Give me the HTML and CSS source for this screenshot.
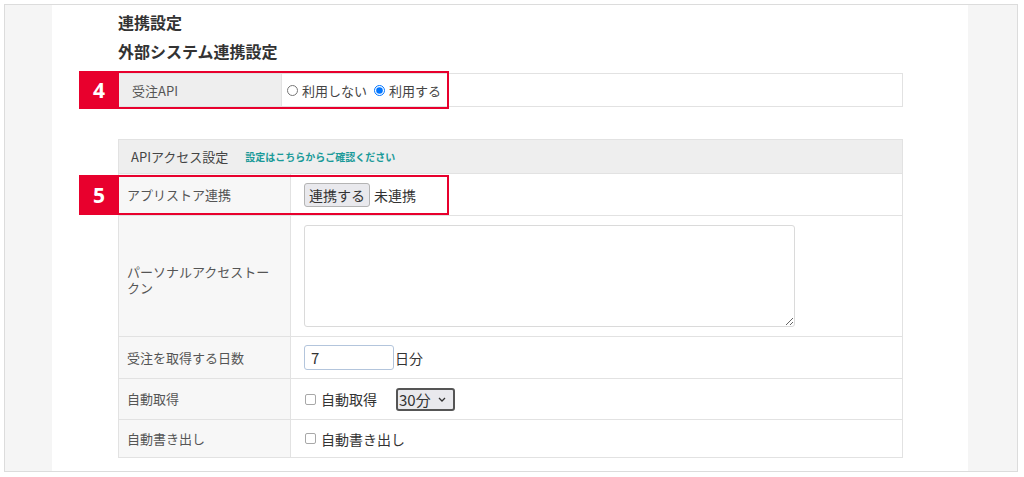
FILE: index.html
```html
<!DOCTYPE html>
<html lang="ja">
<head>
<meta charset="utf-8">
<title>連携設定</title>
<link rel="stylesheet" href="styles.css">
</head>
<body>
<div class="frame">
  <div class="side"></div>
  <main class="content">
    <h1 class="h1">連携設定</h1>
    <h2 class="h2">外部システム連携設定</h2>

    <div class="tbl tbl1">
      <div class="row1">
        <div class="lab1">受注API</div>
        <div class="val1">
          <label class="opt"><input type="radio" name="api"> 利用しない</label>
          <label class="opt"><input type="radio" name="api" checked> 利用する</label>
        </div>
      </div>
      <div class="anno anno4"><span class="badge">4</span></div>
    </div>

    <div class="tbl tbl2">
      <div class="head">APIアクセス設定<span class="link">設定はこちらからご確認ください</span></div>
      <div class="row r1">
        <div class="lab">アプリストア連携</div>
        <div class="val"><button class="btn" type="button">連携する</button><span class="status">未連携</span></div>
      </div>
      <div class="row r2">
        <div class="lab lab-wrap">パーソナルアクセストークン</div>
        <div class="val"><textarea class="ta"></textarea></div>
      </div>
      <div class="row r3">
        <div class="lab">受注を取得する日数</div>
        <div class="val"><input class="num" type="text" value="7"><span class="unit">日分</span></div>
      </div>
      <div class="row r4">
        <div class="lab">自動取得</div>
        <div class="val"><label class="chk"><input type="checkbox"> 自動取得</label><span class="selwrap"><select class="sel"><option>30分</option></select><svg class="chev" width="8" height="5" viewBox="0 0 8 5"><path d="M1 1 L4 4 L7 1" fill="none" stroke="#333" stroke-width="1.3"/></svg></span></div>
      </div>
      <div class="row r5">
        <div class="lab">自動書き出し</div>
        <div class="val"><label class="chk"><input type="checkbox"> 自動書き出し</label></div>
      </div>
      <div class="anno anno5"><span class="badge">5</span></div>
    </div>
  </main>
  <div class="side"></div>
</div>
</body>
</html>
```
FILE: styles.css
```css
* { box-sizing: border-box; }
html, body { margin: 0; padding: 0; background: #fff; }
body {
  font-family: "Noto Sans CJK JP", "Noto Sans", sans-serif;
  color: #333;
}
.frame {
  margin: 4px 0 0 4px;
  width: 1014px;
  height: 468px;
  border: 1px solid #dcdcdc;
  display: grid;
  grid-template-columns: 47px 916px 1fr;
  overflow: hidden;
}
.side { background: #f5f5f5; }
.content {
  background: #fff;
  padding: 8px 0 0 66px;
}
.h1, .h2 {
  margin: 0;
  font-size: 16px;
  line-height: 18px;
  font-weight: 700;
  color: #333;
}
.h2 { margin-top: 11px; }

.tbl {
  position: relative;
  width: 785px;
  border: 1px solid #e2e2e2;
}
.tbl1 { margin-top: 13px; }
.row1 {
  display: grid;
  grid-template-columns: 163px 1fr;
  height: 32px;
}
.lab1 {
  background: #eeeeee;
  border-right: 1px solid #e2e2e2;
  font-size: 13px;
  color: #555;
  padding-left: 13px;
  display: flex;
  align-items: center;
}
.val1 {
  display: flex;
  align-items: center;
  padding-left: 4px;
  font-size: 13px;
  color: #444;
}
.opt { display: inline-flex; align-items: center; margin-right: 6px; }
.opt input {
  width: 11px; height: 11px;
  margin: 0 4px 0 1px;
}

.tbl2 { margin-top: 32px; }
.head {
  height: 33px;
  background: #eeeeee;
  display: flex;
  align-items: center;
  padding-left: 12px;
  font-size: 13px;
  color: #444;
}
.link {
  margin-left: 17px;
  font-size: 10px;
  font-weight: 700;
  color: #1a9a99;
}
.row {
  display: grid;
  grid-template-columns: 172px 1fr;
  border-top: 1px solid #e2e2e2;
}
.r1 { height: 42px; }
.r2 { height: 121px; }
.r3 { height: 42px; }
.r4 { height: 41px; }
.r5 { height: 38px; }
.lab {
  background: #f7f7f7;
  border-right: 1px solid #e2e2e2;
  font-size: 13px;
  color: #555;
  padding: 0 12px 0 8px;
  display: flex;
  align-items: center;
  line-height: 1.2;
}
.lab-wrap { padding-top: 8px; }
.val {
  display: flex;
  align-items: center;
  padding-left: 13px;
  font-size: 14px;
  color: #333;
}
.btn {
  font-family: inherit;
  font-size: 14px;
  color: #333;
  height: 24px;
  padding: 0 4px;
  background: #e9e9ed;
  border: 1px solid #b4b4b4;
  border-radius: 3px;
  line-height: 20px;
}
.status { margin-left: 4px; }
.ta {
  width: 491px;
  height: 102px;
  border: 1px solid #dadada;
  border-radius: 3px;
  margin-top: -1px;
  resize: both;
  font-family: inherit;
}
.num {
  width: 90px;
  height: 25px;
  border: 1px solid #b3c5dc;
  border-radius: 3px;
  padding: 0 6px;
  font-family: inherit;
  font-size: 15px;
  color: #333;
}
.unit { margin-left: 1px; }
.chk { display: inline-flex; align-items: center; }
.chk input {
  -webkit-appearance: none;
  appearance: none;
  width: 11px; height: 11px;
  margin: 0 5px 0 1px;
  border: 1px solid #a8a8a8;
  border-radius: 2px;
  background: #fff;
}
.selwrap {
  position: relative;
  display: inline-block;
  margin-left: 19px;
  height: 23px;
}
.sel {
  -webkit-appearance: none;
  appearance: none;
  width: 59px;
  height: 23px;
  border: 2px solid #555;
  border-radius: 3px;
  background: #e9e9ed;
  font-family: inherit;
  font-size: 15px;
  color: #333;
  padding: 0 0 0 1px;
  line-height: 19px;
}
.chev {
  position: absolute;
  right: 9px;
  top: 9px;
  pointer-events: none;
}

.anno {
  position: absolute;
  left: -40px;
  width: 370px;
  border: 2px solid #e8002d;
  pointer-events: none;
}
.anno4 { top: -3px; height: 38px; }
.anno5 { top: 35px; height: 40px; }
.badge {
  position: absolute;
  left: -2px; top: -2px; bottom: -2px;
  width: 40px;
  background: #e8002d;
  color: #fff;
  font-family: "Noto Sans", sans-serif;
  font-weight: 700;
  font-size: 21px;
  display: flex;
  align-items: center;
  justify-content: center;
}
```
